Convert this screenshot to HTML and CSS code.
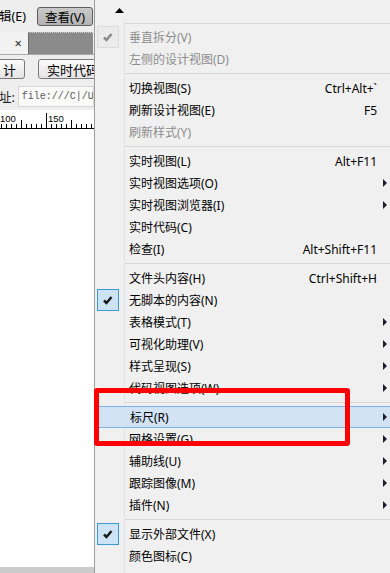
FILE: index.html
```html
<!DOCTYPE html>
<html lang="zh-CN">
<head>
  <meta charset="UTF-8" />
  <title>查看菜单</title>
  <link rel="stylesheet" href="styles.css">
</head>
<body>

  <div class="app">
    <div class="menubar">
      <span class="menubar-item">辑(E)</span>
      <span class="menubar-btn">查看(V)</span>
    </div>
    <div class="tabs">
      <div class="tab">×</div>
      <div class="tab-rest"></div>
    </div>
    <div class="toolbar">
      <span class="tool-btn first">计</span>
      <span class="tool-sep"></span>
      <span class="tool-btn">实时代码</span>
    </div>
    <div class="address">
      <span class="address-label">址:</span>
      <div class="url">file:///C|/Users</div>
    </div>
    <div class="ruler">
      <svg width="94" height="20" viewBox="0 0 94 20">
        <g stroke="#000" stroke-width="1">
          <line x1="0" y1="18.5" x2="94" y2="18.5" />
          <line x1="1.5" y1="14" x2="1.5" y2="18" />
          <line x1="6.5" y1="14" x2="6.5" y2="18" />
          <line x1="11.5" y1="14" x2="11.5" y2="18" />
          <line x1="16.5" y1="14" x2="16.5" y2="18" />
          <line x1="21.5" y1="10" x2="21.5" y2="18" />
          <line x1="26.5" y1="14" x2="26.5" y2="18" />
          <line x1="31.5" y1="14" x2="31.5" y2="18" />
          <line x1="36.5" y1="14" x2="36.5" y2="18" />
          <line x1="41.5" y1="14" x2="41.5" y2="18" />
          <line x1="46.5" y1="3" x2="46.5" y2="18" />
          <line x1="51.5" y1="14" x2="51.5" y2="18" />
          <line x1="56.5" y1="14" x2="56.5" y2="18" />
          <line x1="61.5" y1="14" x2="61.5" y2="18" />
          <line x1="66.5" y1="14" x2="66.5" y2="18" />
          <line x1="71.5" y1="10" x2="71.5" y2="18" />
          <line x1="76.5" y1="14" x2="76.5" y2="18" />
          <line x1="81.5" y1="14" x2="81.5" y2="18" />
          <line x1="86.5" y1="14" x2="86.5" y2="18" />
          <line x1="91.5" y1="14" x2="91.5" y2="18" />
        </g>
        <text x="0" y="12" class="ruler-num">100</text>
        <text x="48" y="12" class="ruler-num">150</text>
      </svg>
    </div>
    <div class="canvas"></div>
    <div class="hscroll"></div>
  </div>

  <div class="menu">
    <div class="menu-top">
      <svg class="up" width="9" height="5" viewBox="0 0 9 5"><polygon points="0,5 9,5 4.5,0" fill="#000" /></svg>
    </div>
    <div class="menu-body">
      <div class="sep top"></div>

      <div class="item disabled"><span class="check off"><svg width="20" height="20" viewBox="0 0 20 20"><path d="M6 10.5 L8.5 13 L13.5 7" /></svg></span><span class="label">垂直拆分(V)</span></div>
      <div class="item disabled"><span class="check empty"></span><span class="label">左侧的设计视图(D)</span></div>
      <div class="sep"></div>

      <div class="item"><span class="check empty"></span><span class="label">切换视图(S)</span><span class="key">Ctrl+Alt+`</span></div>
      <div class="item"><span class="check empty"></span><span class="label">刷新设计视图(E)</span><span class="key">F5</span></div>
      <div class="item disabled"><span class="check empty"></span><span class="label">刷新样式(Y)</span></div>
      <div class="sep"></div>

      <div class="item"><span class="check empty"></span><span class="label">实时视图(L)</span><span class="key">Alt+F11</span></div>
      <div class="item"><span class="check empty"></span><span class="label">实时视图选项(O)</span><span class="arrow"></span></div>
      <div class="item"><span class="check empty"></span><span class="label">实时视图浏览器(I)</span><span class="arrow"></span></div>
      <div class="item"><span class="check empty"></span><span class="label">实时代码(C)</span></div>
      <div class="item"><span class="check empty"></span><span class="label">检查(I)</span><span class="key">Alt+Shift+F11</span></div>
      <div class="sep"></div>

      <div class="item"><span class="check empty"></span><span class="label">文件头内容(H)</span><span class="key">Ctrl+Shift+H</span></div>
      <div class="item"><span class="check on"><svg width="20" height="20" viewBox="0 0 20 20"><path d="M6 10.5 L8.5 13 L13.5 7" /></svg></span><span class="label">无脚本的内容(N)</span></div>
      <div class="item"><span class="check empty"></span><span class="label">表格模式(T)</span><span class="arrow"></span></div>
      <div class="item"><span class="check empty"></span><span class="label">可视化助理(V)</span><span class="arrow"></span></div>
      <div class="item"><span class="check empty"></span><span class="label">样式呈现(S)</span><span class="arrow"></span></div>
      <div class="item"><span class="check empty"></span><span class="label">代码视图选项(W)</span><span class="arrow"></span></div>
      <div class="sep"></div>

      <div class="item hover"><span class="check empty"></span><span class="label">标尺(R)</span><span class="arrow"></span></div>
      <div class="item"><span class="check empty"></span><span class="label">网格设置(G)</span><span class="arrow"></span></div>
      <div class="item"><span class="check empty"></span><span class="label">辅助线(U)</span><span class="arrow"></span></div>
      <div class="item"><span class="check empty"></span><span class="label">跟踪图像(M)</span><span class="arrow"></span></div>
      <div class="item"><span class="check empty"></span><span class="label">插件(N)</span><span class="arrow"></span></div>
      <div class="sep"></div>

      <div class="item"><span class="check on"><svg width="20" height="20" viewBox="0 0 20 20"><path d="M6 10.5 L8.5 13 L13.5 7" /></svg></span><span class="label">显示外部文件(X)</span></div>
      <div class="item"><span class="check empty"></span><span class="label">颜色图标(C)</span></div>
    </div>
  </div>

  <div class="callout"></div>

</body>
</html>
```

FILE: styles.css
```css
html, body {
  margin: 0;
  padding: 0;
  height: 100%;
}

body {
  display: flex;
  flex-direction: row;
  width: 390px;
  height: 573px;
  overflow: hidden;
  position: relative;
  font-family: "Noto Sans", "Noto Sans CJK SC", sans-serif;
  font-size: 12px;
  color: #000;
  background: #f0f0f0;
}

/* left: the editor window behind the menu */

.app {
  width: 94px;
  flex-shrink: 0;
  display: flex;
  flex-direction: column;
  border-right: 1px solid #9c9c9c;
  overflow: hidden;
  background: #eeeeee;
}

.menubar {
  height: 32px;
  display: flex;
  align-items: center;
  gap: 11px;
  white-space: nowrap;
  padding-bottom: 2px;
  box-sizing: border-box;
}

.menubar-item {
  font-size: 12.5px;
  margin-left: -1px;
}

.menubar-btn {
  height: 19px;
  width: 56px;
  box-sizing: border-box;
  flex-shrink: 0;
  display: flex;
  align-items: center;
  justify-content: center;
  border: 1px solid #5e5e5e;
  border-radius: 3px;
  background: linear-gradient(#c9c9c9, #b3b3b3);
  font-size: 12.5px;
  margin-top: 2px;
}

.tabs {
  height: 22px;
  display: flex;
  border-bottom: 1px solid #a8a8a8;
}

.tab {
  width: 28px;
  display: flex;
  align-items: center;
  justify-content: flex-end;
  padding-right: 6px;
  box-sizing: border-box;
  background: #f2f2f2;
  font-size: 13px;
  color: #222;
}

.tab-rest {
  flex: 1;
  margin-right: 1px;
  background: #8b8b8b;
  border-top: 1px dotted #d0d0d0;
  border-left: 1px solid #6a6a6a;
}

.toolbar {
  height: 28px;
  display: flex;
  align-items: center;
  white-space: nowrap;
}

.tool-btn {
  height: 18px;
  flex-shrink: 0;
  display: flex;
  align-items: center;
  padding: 0 8px;
  border: 1px solid #7a7a7a;
  border-radius: 3px;
  background: linear-gradient(#fbfbfb, #e4e4e4);
  font-size: 13px;
}

.tool-btn.first {
  margin-left: -8px;
  padding-left: 10px;
}

.tool-sep {
  width: 1px;
  height: 24px;
  background: #c2c2c2;
  margin: 0 5px 0 8px;
}

.address {
  height: 27px;
  display: flex;
  align-items: center;
  gap: 3px;
  white-space: nowrap;
}

.address-label {
  font-size: 12.5px;
  color: #222;
  margin-left: -1px;
}

.url {
  flex: 1;
  height: 19px;
  display: flex;
  align-items: center;
  padding-left: 3px;
  overflow: hidden;
  border: 1px solid #d6d6d6;
  background: #fafafa;
  font-family: "Liberation Mono", monospace;
  font-size: 10px;
  color: #5a5a5a;
}

.ruler {
  height: 20px;
  background: #fff;
}

.ruler svg {
  display: block;
}

.ruler-num {
  font-family: "Liberation Sans", sans-serif;
  font-size: 9.5px;
  fill: #000;
}

.canvas {
  flex: 1;
  background: #fff;
}

.hscroll {
  height: 6px;
  background: #cbcbcb;
}

/* right: the open view menu */

.menu {
  flex: 1;
  display: flex;
  flex-direction: column;
  background: #f0f0f0;
}

.menu-top {
  height: 20px;
}

.up {
  display: block;
  margin: 8px 0 0 20px;
}

.menu-body {
  flex: 1;
  padding-top: 3px;
  background: linear-gradient(to right, transparent 29px, #e2e2e2 29px, #e2e2e2 30px, transparent 30px);
}

.sep {
  height: 1px;
  margin: 3px 0 3px 30px;
  background: #d7d7d7;
}

.sep.top {
  margin: 0 0 2px 30px;
}

.item {
  height: 22px;
  display: flex;
  align-items: center;
  box-sizing: border-box;
  white-space: nowrap;
}

.item.disabled {
  color: #8d8d8d;
}

.item.hover {
  background: #d1e3f4;
  border: 1px solid #80b1e6;
  border-right: none;
  margin-left: 1px;
}

.item.hover .check {
  margin-left: 1px;
}

.check {
  width: 22px;
  height: 22px;
  box-sizing: border-box;
  margin-left: 2px;
  margin-right: 10px;
  flex-shrink: 0;
  display: flex;
  align-items: center;
  justify-content: center;
}

.check svg {
  display: block;
}

.check path {
  fill: none;
  stroke: #1b1b1b;
  stroke-width: 2.5;
}

.check.on {
  border: 1px solid #3a9ad9;
  background: #cde4f6;
}

.check.off {
  border: 1px solid #dcdcdc;
  background: #ebebeb;
}

.check.off path {
  stroke: #8a8a8a;
}

.label {
  flex: 1;
}

.key {
  margin-right: 13px;
  font-size: 12px;
}

.arrow {
  width: 0;
  height: 0;
  margin-right: 3px;
  border-left: 4px solid #1e1e2a;
  border-top: 4px solid transparent;
  border-bottom: 4px solid transparent;
}

/* red annotation drawn over the screenshot */

.callout {
  position: absolute;
  left: 94px;
  top: 388px;
  width: 256px;
  height: 58px;
  box-sizing: border-box;
  border: 5px solid #ff0000;
  border-radius: 3px;
}
```
